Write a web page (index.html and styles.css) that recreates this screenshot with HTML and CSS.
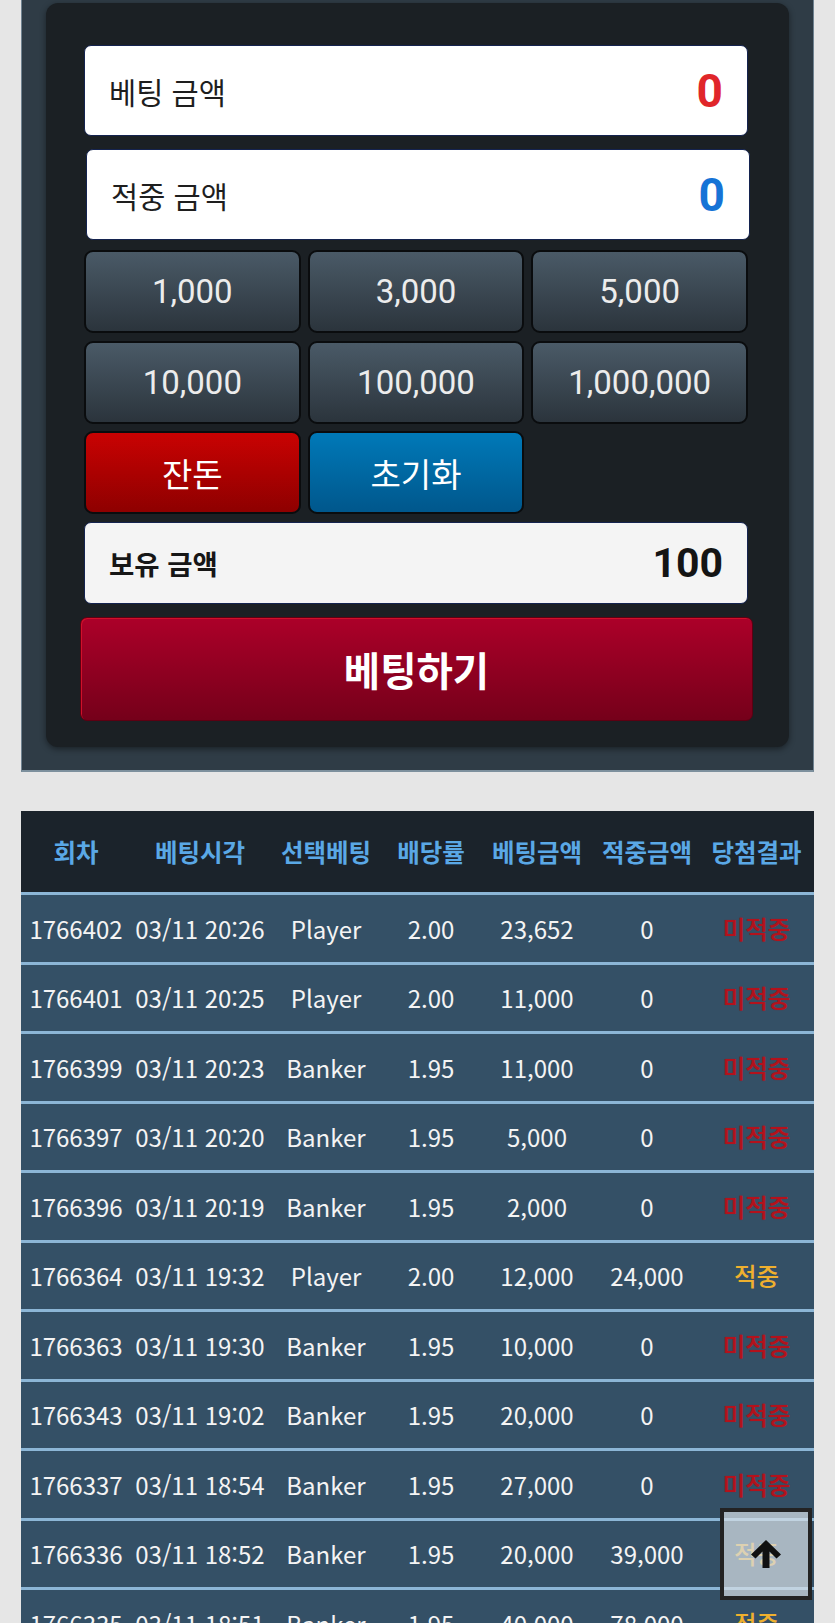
FILE: index.html
```html
<!DOCTYPE html>
<html lang="ko">
<head>
<meta charset="utf-8">
<title>베팅</title>
<link rel="stylesheet" href="styles.css">
</head>
<body>
<div class="outer">
  <div class="inner">
    <div class="amount-box bet-box">
      <span class="label">베팅 금액</span>
      <span class="value red">0</span>
    </div>
    <div class="amount-box win-box">
      <span class="label">적중 금액</span>
      <span class="value blue">0</span>
    </div>
    <div class="btn-grid">
      <button class="chip">1,000</button>
      <button class="chip">3,000</button>
      <button class="chip">5,000</button>
      <button class="chip">10,000</button>
      <button class="chip">100,000</button>
      <button class="chip">1,000,000</button>
      <button class="chip chip-red">잔돈</button>
      <button class="chip chip-blue">초기화</button>
    </div>
    <div class="amount-box hold-box">
      <span class="label bold">보유 금액</span>
      <span class="value dark">100</span>
    </div>
    <button class="bet-btn">베팅하기</button>
  </div>
</div>

<div class="history">
  <div class="row head">
    <div>회차</div><div>베팅시각</div><div>선택베팅</div><div>배당률</div><div>베팅금액</div><div>적중금액</div><div>당첨결과</div>
  </div>
  <div class="row"><div>1766402</div><div>03/11 20:26</div><div>Player</div><div>2.00</div><div>23,652</div><div>0</div><div class="lose">미적중</div></div>
  <div class="row"><div>1766401</div><div>03/11 20:25</div><div>Player</div><div>2.00</div><div>11,000</div><div>0</div><div class="lose">미적중</div></div>
  <div class="row"><div>1766399</div><div>03/11 20:23</div><div>Banker</div><div>1.95</div><div>11,000</div><div>0</div><div class="lose">미적중</div></div>
  <div class="row"><div>1766397</div><div>03/11 20:20</div><div>Banker</div><div>1.95</div><div>5,000</div><div>0</div><div class="lose">미적중</div></div>
  <div class="row"><div>1766396</div><div>03/11 20:19</div><div>Banker</div><div>1.95</div><div>2,000</div><div>0</div><div class="lose">미적중</div></div>
  <div class="row"><div>1766364</div><div>03/11 19:32</div><div>Player</div><div>2.00</div><div>12,000</div><div>24,000</div><div class="win">적중</div></div>
  <div class="row"><div>1766363</div><div>03/11 19:30</div><div>Banker</div><div>1.95</div><div>10,000</div><div>0</div><div class="lose">미적중</div></div>
  <div class="row"><div>1766343</div><div>03/11 19:02</div><div>Banker</div><div>1.95</div><div>20,000</div><div>0</div><div class="lose">미적중</div></div>
  <div class="row"><div>1766337</div><div>03/11 18:54</div><div>Banker</div><div>1.95</div><div>27,000</div><div>0</div><div class="lose">미적중</div></div>
  <div class="row"><div>1766336</div><div>03/11 18:52</div><div>Banker</div><div>1.95</div><div>20,000</div><div>39,000</div><div class="win">적중</div></div>
  <div class="row"><div>1766335</div><div>03/11 18:51</div><div>Banker</div><div>1.95</div><div>40,000</div><div>78,000</div><div class="win">적중</div></div>
</div>

<button class="to-top" aria-label="맨 위로">
  <svg viewBox="0 0 34 30" width="34" height="30">
    <path d="M17 1 L32 15.5 L27.5 19.5 L20.5 12.5 L20.5 29 L13.5 29 L13.5 12.5 L6.5 19.5 L2 15.5 Z" fill="#111"/>
  </svg>
</button>
</body>
</html>
```
FILE: styles.css
```css
html, body {
  margin: 0;
  padding: 0;
}
body {
  background: #e6e6e6;
  font-family: Roboto, "Noto Sans CJK KR", sans-serif;
  width: 835px;
}

.outer {
  margin: 0 21px;
  background: #2f3c46;
  border-left: 1px solid #6f8290;
  border-right: 1px solid #6f8290;
  border-bottom: 2px solid #7d909d;
  padding: 3px 24px 23px 24px;
}

.inner {
  background: #1b2024;
  border-radius: 12px;
  box-shadow: 0 2px 6px rgba(0, 0, 0, 0.45);
  padding: 42px 41px 26px 38px;
  display: flex;
  flex-direction: column;
}

.amount-box {
  box-sizing: border-box;
  height: 91px;
  background: #ffffff;
  border: 1px solid #14234f;
  border-radius: 7px;
  display: flex;
  align-items: center;
  justify-content: space-between;
  padding: 0 24px 0 24px;
}
.win-box {
  margin: 13px -2px 0 2px;
}
.label {
  font-family: "Noto Sans CJK KR", sans-serif;
  font-size: 29.5px;
  color: #1e1e1e;
}
.label.bold {
  font-weight: 700;
  font-size: 27.5px;
  color: #161616;
}
.value {
  font-family: Roboto, sans-serif;
  font-weight: 700;
  font-size: 46px;
}
.red { color: #e0262a; }
.blue { color: #1673d6; }
.dark { color: #141414; font-size: 41px; }

.btn-grid {
  margin-top: 10px;
  display: grid;
  grid-template-columns: repeat(3, 1fr);
  grid-auto-rows: 83px;
  column-gap: 7px;
  row-gap: 7.5px;
}
.chip {
  box-sizing: border-box;
  border: 2px solid #0a0c0e;
  border-radius: 9px;
  background: linear-gradient(to bottom, #4a5a67 0%, #2b343c 100%);
  color: #ececec;
  font-family: Roboto, "Noto Sans CJK KR", sans-serif;
  font-size: 33px;
  padding: 0;
}
.chip-red {
  background: linear-gradient(to bottom, #c90202 0%, #8e0000 100%);
  color: #ffffff;
  font-family: "Noto Sans CJK KR", sans-serif;
  font-size: 33px;
}
.chip-blue {
  background: linear-gradient(to bottom, #0079b8 0%, #00578c 100%);
  color: #ffffff;
  font-family: "Noto Sans CJK KR", sans-serif;
  font-size: 33px;
}

.hold-box {
  margin-top: 8px;
  height: 81.5px;
  background: #f4f4f4;
}

.bet-btn {
  margin: 13px -5px 0 -4px;
  height: 104.5px;
  box-sizing: border-box;
  border: 1px solid #5c0012;
  border-radius: 7px;
  background: linear-gradient(to bottom, #ac0029 0%, #75001a 100%);
  box-shadow: inset 1px 1px 0 #d0102a;
  color: #ffffff;
  font-family: "Noto Sans CJK KR", sans-serif;
  font-weight: 700;
  font-size: 39.5px;
  padding: 0;
}

.history {
  margin: 39px 21px 0 21px;
  background: #345066;
  font-family: "Noto Sans CJK KR", sans-serif;
}
.row {
  display: grid;
  grid-template-columns: 110px 138px 114px 96px 116px 104px 115px;
  height: 66.5px;
  border-top: 3px solid #8cb6d6;
  color: #f4f4f4;
  font-size: 24px;
}
.row > div {
  display: flex;
  align-items: center;
  justify-content: center;
  white-space: nowrap;
}
.row.head {
  height: 81px;
  border-top: none;
  background: #1b232b;
  color: #5aa8e6;
  font-weight: 700;
  font-size: 24.5px;
}
.lose {
  color: #b3121c;
  font-size: 24.5px;
  font-weight: 500;
  text-shadow: 0 0 1px rgba(179, 18, 28, 0.8);
}
.win {
  color: #efb02e;
  font-size: 24.5px;
  font-weight: 500;
}

.to-top {
  position: fixed;
  right: 23px;
  bottom: 23px;
  width: 92px;
  height: 92px;
  box-sizing: border-box;
  border: 4px solid #232323;
  background: rgba(214, 222, 228, 0.72);
  padding: 0;
  display: flex;
  align-items: center;
  justify-content: center;
}
.to-top svg {
  display: block;
}
```
